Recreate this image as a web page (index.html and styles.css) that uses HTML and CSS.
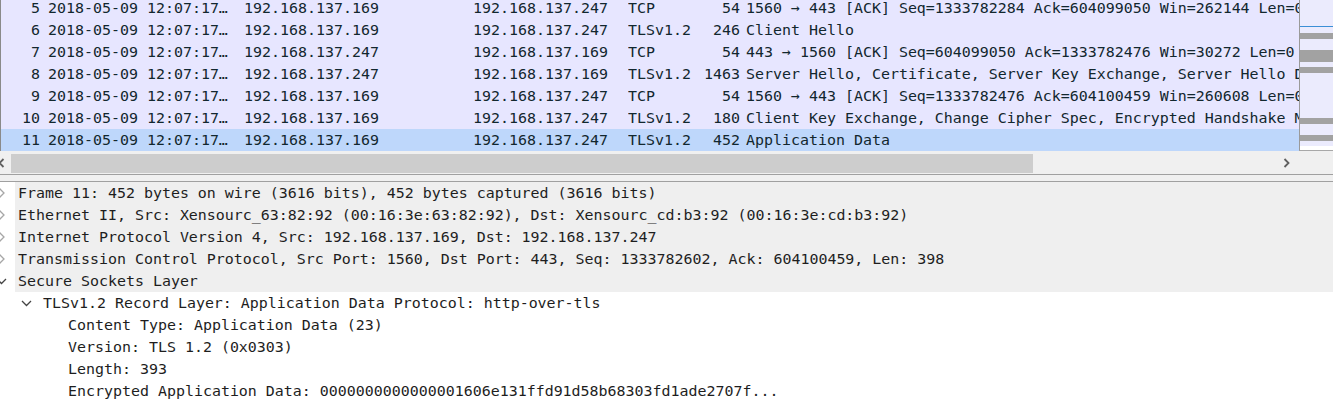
FILE: index.html
```html
<!DOCTYPE html>
<html>
<head>
<meta charset="utf-8">
<title>Wireshark</title>
<link rel="stylesheet" href="styles.css">
</head>
<body>
<div class="pane-list">
  <div class="list">
    <div class="rows">
      <div class="row"><span class="c-no">5</span><span class="c-time">2018-05-09 12:07:17…</span><span class="c-src">192.168.137.169</span><span class="c-dst">192.168.137.247</span><span class="c-proto">TCP</span><span class="c-len">54</span><span class="c-info">1560 → 443 [ACK] Seq=1333782284 Ack=604099050 Win=262144 Len=0</span></div>
      <div class="row"><span class="c-no">6</span><span class="c-time">2018-05-09 12:07:17…</span><span class="c-src">192.168.137.169</span><span class="c-dst">192.168.137.247</span><span class="c-proto">TLSv1.2</span><span class="c-len">246</span><span class="c-info">Client Hello</span></div>
      <div class="row"><span class="c-no">7</span><span class="c-time">2018-05-09 12:07:17…</span><span class="c-src">192.168.137.247</span><span class="c-dst">192.168.137.169</span><span class="c-proto">TCP</span><span class="c-len">54</span><span class="c-info">443 → 1560 [ACK] Seq=604099050 Ack=1333782476 Win=30272 Len=0</span></div>
      <div class="row"><span class="c-no">8</span><span class="c-time">2018-05-09 12:07:17…</span><span class="c-src">192.168.137.247</span><span class="c-dst">192.168.137.169</span><span class="c-proto">TLSv1.2</span><span class="c-len">1463</span><span class="c-info">Server Hello, Certificate, Server Key Exchange, Server Hello Done</span></div>
      <div class="row"><span class="c-no">9</span><span class="c-time">2018-05-09 12:07:17…</span><span class="c-src">192.168.137.169</span><span class="c-dst">192.168.137.247</span><span class="c-proto">TCP</span><span class="c-len">54</span><span class="c-info">1560 → 443 [ACK] Seq=1333782476 Ack=604100459 Win=260608 Len=0</span></div>
      <div class="row"><span class="c-no">10</span><span class="c-time">2018-05-09 12:07:17…</span><span class="c-src">192.168.137.169</span><span class="c-dst">192.168.137.247</span><span class="c-proto">TLSv1.2</span><span class="c-len">180</span><span class="c-info">Client Key Exchange, Change Cipher Spec, Encrypted Handshake Message</span></div>
      <div class="row sel"><span class="c-no">11</span><span class="c-time">2018-05-09 12:07:17…</span><span class="c-src">192.168.137.169</span><span class="c-dst">192.168.137.247</span><span class="c-proto">TLSv1.2</span><span class="c-len">452</span><span class="c-info">Application Data</span></div>
    </div>
  </div>
  <div class="minimap">
    <div class="mm-lav" style="height:26px"></div>
    <div class="mm-view"></div>
    <div class="mm-lav" style="height:6px"></div>
    <div class="mm-mark" style="height:6px"></div>
    <div class="mm-lav" style="height:11px"></div>
    <div class="mm-mark" style="height:12px"></div>
    <div class="mm-lav" style="height:5px"></div>
    <div class="mm-mark" style="height:6px"></div>
    <div class="mm-lav" style="height:45px"></div>
    <div class="mm-mark" style="height:6px"></div>
    <div class="mm-lav" style="height:11px"></div>
    <div class="mm-mark" style="height:6px"></div>
    <div class="mm-lav" style="height:5px"></div>
    <div class="mm-end"></div>
  </div>
</div>
<div class="hscroll">
  <div class="hs-left"><svg width="11" height="23" viewBox="0 0 11 23"><path d="M3.5 8 L-0.5 12 L3.5 16" class="hs-arrow"/></svg></div>
  <div class="hs-thumb"></div>
  <div class="hs-track"></div>
  <div class="hs-right"><svg width="16" height="23" viewBox="0 0 16 23"><path d="M4.5 8 L8.5 12 L4.5 16" class="hs-arrow"/></svg></div>
  <div class="hs-corner"></div>
</div>
<div class="splitter"></div>
<div class="details">
  <div class="node top"><span class="toggle"><svg width="15" height="22" viewBox="0 0 15 22"><path d="M-0.5 6.5 L4 11 L-0.5 15.5" class="chev-closed"/></svg></span><span class="label">Frame 11: 452 bytes on wire (3616 bits), 452 bytes captured (3616 bits)</span></div>
  <div class="node top"><span class="toggle"><svg width="15" height="22" viewBox="0 0 15 22"><path d="M-0.5 6.5 L4 11 L-0.5 15.5" class="chev-closed"/></svg></span><span class="label">Ethernet II, Src: Xensourc_63:82:92 (00:16:3e:63:82:92), Dst: Xensourc_cd:b3:92 (00:16:3e:cd:b3:92)</span></div>
  <div class="node top"><span class="toggle"><svg width="15" height="22" viewBox="0 0 15 22"><path d="M-0.5 6.5 L4 11 L-0.5 15.5" class="chev-closed"/></svg></span><span class="label">Internet Protocol Version 4, Src: 192.168.137.169, Dst: 192.168.137.247</span></div>
  <div class="node top"><span class="toggle"><svg width="15" height="22" viewBox="0 0 15 22"><path d="M-0.5 6.5 L4 11 L-0.5 15.5" class="chev-closed"/></svg></span><span class="label">Transmission Control Protocol, Src Port: 1560, Dst Port: 443, Seq: 1333782602, Ack: 604100459, Len: 398</span></div>
  <div class="node top"><span class="toggle"><svg width="15" height="22" viewBox="0 0 15 22"><path d="M-3 9 L1.5 13.5 L6 9" class="chev-open"/></svg></span><span class="label">Secure Sockets Layer</span></div>
  <div class="node lv1"><span class="toggle"><svg width="15" height="22" viewBox="0 0 15 22"><path d="M-3 9 L1.5 13.5 L6 9" class="chev-open"/></svg></span><span class="label">TLSv1.2 Record Layer: Application Data Protocol: http-over-tls</span></div>
  <div class="node lv2"><span class="toggle"></span><span class="label">Content Type: Application Data (23)</span></div>
  <div class="node lv2"><span class="toggle"></span><span class="label">Version: TLS 1.2 (0x0303)</span></div>
  <div class="node lv2"><span class="toggle"></span><span class="label">Length: 393</span></div>
  <div class="node lv2"><span class="toggle"></span><span class="label">Encrypted Application Data: 0000000000000001606e131ffd91d58b68303fd1ade2707f...</span></div>
</div>
</body>
</html>
```

FILE: styles.css
```css
html, body {
  margin: 0;
  padding: 0;
}
body {
  width: 1333px;
  height: 412px;
  overflow: hidden;
  background: #ffffff;
  font-family: "DejaVu Sans Mono", "Liberation Mono", monospace;
  font-size: 14.95px;
}

/* packet list */
.pane-list {
  display: flex;
  height: 151px;
  background: #f0f0f0;
}
.list {
  flex: 1;
  overflow: hidden;
  border-left: 1px solid #8a8a8a;
  background: #e7e6ff;
}
.rows {
  margin-top: -3px;
}
.row {
  display: flex;
  height: 22px;
  line-height: 22px;
  background: #e7e6ff;
  color: #12272e;
  white-space: nowrap;
}
.row.sel {
  background: #bed7fb;
}
.row span {
  flex-shrink: 0;
  overflow: hidden;
}
.c-no { width: 39px; text-align: right; }
.c-time { width: 196px; padding-left: 8px; }
.c-src { width: 229px; }
.c-dst { width: 155px; }
.c-proto { width: 64px; }
.c-len { width: 48px; text-align: right; }
.row .c-info {
  flex: 1 1 auto;
  min-width: 0;
  padding-left: 6px;
  overflow: hidden;
}

/* minimap */
.minimap {
  width: 33px;
  flex-shrink: 0;
  border-left: 1px solid #9a9a9a;
  border-bottom: 1px solid #a8a8a8;
  display: flex;
  flex-direction: column;
  background: #ebebfd;
}
.mm-lav { background: #ebebfd; }
.mm-view { height: 1px; background: #3c8fd6; }
.mm-mark { background: #a2a2a2; }
.mm-end { flex: 1; background: #ffffff; }

/* horizontal scrollbar */
.hscroll {
  display: flex;
  height: 23px;
  background: #f0f0f0;
}
.hs-left { width: 11px; flex-shrink: 0; }
.hs-thumb {
  width: 1022px;
  flex-shrink: 0;
  margin-top: 3px;
  height: 19px;
  background: #cdcdcd;
}
.hs-track { flex: 1; }
.hs-right { width: 16px; flex-shrink: 0; }
.hs-corner { width: 37px; flex-shrink: 0; }
.hs-arrow {
  fill: none;
  stroke: #606060;
  stroke-width: 1.8;
}

/* splitter */
.splitter {
  height: 6px;
  background: #f0f0f0;
  border-top: 1px solid #a0a0a0;
  border-bottom: 1px solid #a0a0a0;
}

/* details tree */
.details {
  background: #ffffff;
  color: #1e1e1e;
}
.node {
  display: flex;
  height: 22px;
  line-height: 22px;
  white-space: nowrap;
}
.node.lv1 { padding-left: 25px; }
.node.lv2 { padding-left: 50px; }
.toggle {
  width: 15px;
  height: 22px;
  flex-shrink: 0;
}
.toggle svg {
  display: block;
  overflow: visible;
}
.label {
  flex: 1;
  padding-left: 3px;
}
.node.top .label {
  background: #efefef;
}
.chev-closed {
  fill: none;
  stroke: #a6a6a6;
  stroke-width: 1.3;
}
.chev-open {
  fill: none;
  stroke: #444444;
  stroke-width: 1.3;
}
```
